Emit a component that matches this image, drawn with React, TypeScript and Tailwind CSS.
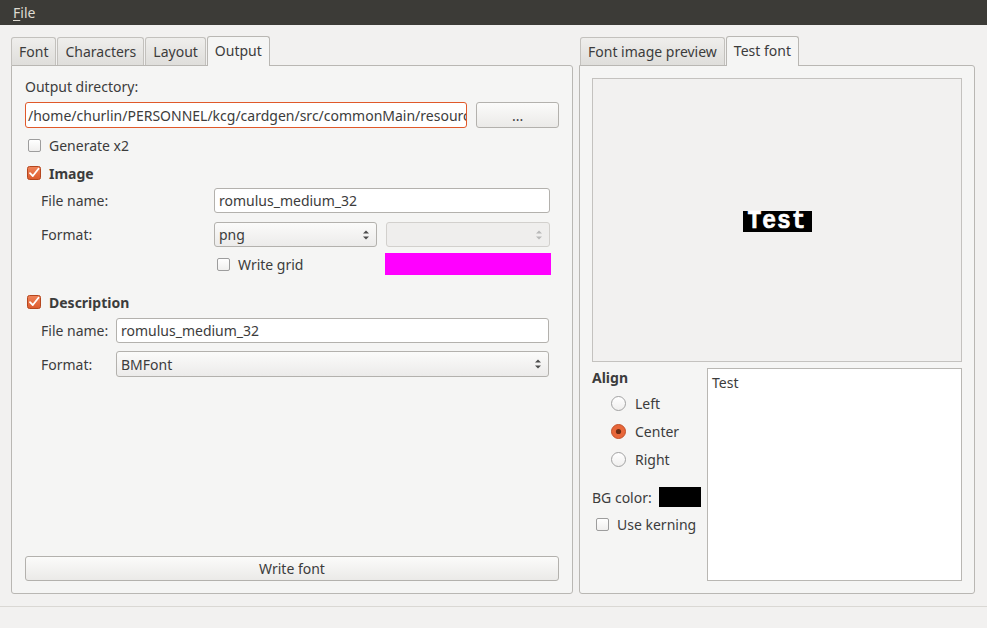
import React from "react";

const font = { fontFamily: '"Noto Sans", "Open Sans", sans-serif' };

function Check({ checked }: { checked?: boolean }) {
  if (checked) {
    return (
      <svg width="14" height="14" viewBox="0 0 14 14" className="shrink-0">
        <defs>
          <linearGradient id="og" x1="0" y1="0" x2="0" y2="1">
            <stop offset="0" stopColor="#f0845a" />
            <stop offset="1" stopColor="#dc5a2c" />
          </linearGradient>
        </defs>
        <rect x="0.5" y="0.5" width="13" height="13" rx="2" fill="url(#og)" stroke="#b4471f" />
        <path d="M3 7.2 L5.8 10 L11.5 2.8" fill="none" stroke="#fff" strokeWidth="1.8" strokeLinecap="round" strokeLinejoin="round" />
      </svg>
    );
  }
  return (
    <div className="w-[13px] h-[13px] shrink-0 rounded-[2px] border border-[#9d9d9d] bg-gradient-to-b from-[#ffffff] to-[#f0efee]" />
  );
}

function Radio({ checked }: { checked?: boolean }) {
  if (checked) {
    return (
      <svg width="15" height="15" viewBox="0 0 15 15" className="shrink-0">
        <circle cx="7.5" cy="7.5" r="7" fill="#e8673a" stroke="#c2502a" />
        <circle cx="7.5" cy="7.5" r="2.6" fill="#6b2c14" />
      </svg>
    );
  }
  return (
    <div className="w-[15px] h-[15px] shrink-0 rounded-full border border-[#a2a2a2] bg-gradient-to-b from-[#ffffff] to-[#f0efee]" />
  );
}

function Arrows({ disabled }: { disabled?: boolean }) {
  const c = disabled ? "#b8b8b8" : "#4c4c4c";
  return (
    <svg width="8" height="12" viewBox="0 0 8 12" className="shrink-0">
      <path d="M1 4.5 L4 1.5 L7 4.5 Z" fill={c} />
      <path d="M1 7.5 L4 10.5 L7 7.5 Z" fill={c} />
    </svg>
  );
}

function Combo({ value, disabled, className }: { value?: string; disabled?: boolean; className: string }) {
  return (
    <div
      className={`${className} h-[25px] rounded-[3px] border flex items-center justify-between pl-[4px] pr-[6px] ${
        disabled
          ? "border-[#d2d0cd] bg-[#efeeed]"
          : "border-[#b3b1ad] bg-gradient-to-b from-[#fbfbfa] to-[#ecebea]"
      }`}
    >
      <span className="text-[#3c3c3c]">{value}</span>
      <Arrows disabled={disabled} />
    </div>
  );
}

function Input({ value, className }: { value: string; className: string }) {
  return (
    <div
      className={`${className} h-[25px] rounded-[3px] border border-[#b3b1ad] bg-white flex items-center pl-[4px] overflow-hidden whitespace-nowrap text-[#3c3c3c]`}
    >
      {value}
    </div>
  );
}

function Tab({ label, active, className = "" }: { label: string; active?: boolean; className?: string }) {
  if (active) {
    return (
      <div
        className={`${className} h-[30px] -mb-[1px] px-[7px] flex items-center rounded-t-[3px] border border-b-0 border-[#b9b7b3] bg-[#f5f5f4] text-[#3c3c3c] relative z-10`}
      >
        <span className="-mt-[2px]">{label}</span>
      </div>
    );
  }
  return (
    <div
      className={`${className} h-[28px] px-[7px] flex items-center rounded-t-[3px] border border-b-0 border-[#c3c1bd] bg-gradient-to-b from-[#efeeec] to-[#dfdedb] text-[#3c3c3c] mr-[1px]`}
    >
      {label}
    </div>
  );
}

export default function App() {
  return (
    <div style={font} className="w-[987px] h-[628px] bg-[#f2f1f0] text-[14px] text-[#3c3c3c] flex flex-col overflow-hidden">
      {/* Menu bar */}
      <div className="h-[25px] bg-[#3c3b37] flex items-center px-[13px] shrink-0">
        <span className="text-[#dfdbd2] text-[14px]">
          <span className="underline underline-offset-2">F</span>ile
        </span>
      </div>

      {/* Main */}
      <div className="flex flex-1 pl-[11px] pt-[10px] pr-[12px] gap-[6px]">
        {/* Left tab widget */}
        <div className="w-[562px] flex flex-col h-[559px]">
          <div className="flex items-end h-[30px]">
            <Tab label="Font" />
            <Tab label="Characters" />
            <Tab label="Layout" />
            <Tab label="Output" active />
          </div>
          <div className="flex-1 border border-[#b9b7b3] rounded-b-[3px] rounded-tr-[3px] bg-[#f5f5f4] flex flex-col px-[13px] pt-[11px] pb-[12px]">
            <div className="leading-[20px]">Output directory:</div>
            <div className="flex gap-[9px] mt-[5px]">
              <div className="w-[443px] h-[26px] rounded-[3px] border border-[#e0592a] bg-white flex items-center pl-[2px] overflow-hidden whitespace-nowrap text-[#3c3c3c]">
                /home/churlin/PERSONNEL/kcg/cardgen/src/commonMain/resources
              </div>
              <div className="w-[83px] h-[26px] rounded-[3px] border border-[#b3b1ad] bg-gradient-to-b from-[#fbfbfa] to-[#ebeae8] flex items-center justify-center text-[#3c3c3c]">
                ...
              </div>
            </div>
            <div className="flex items-center gap-[8px] mt-[7px] ml-[3px] h-[20px]">
              <Check />
              <span>Generate x2</span>
            </div>
            <div className="flex items-center gap-[8px] mt-[8px] ml-[2px] h-[20px]">
              <Check checked />
              <span className="font-bold">Image</span>
            </div>
            {/* Image grid */}
            <div className="grid grid-cols-[173px_163px_9px_164px] items-center ml-[16px]">
              <span className="h-[25px] flex items-center mt-[5px]">File name:</span>
              <Input value="romulus_medium_32" className="col-span-3 mt-[5px]" />
              <span className="h-[25px] flex items-center mt-[9px]">Format:</span>
              <Combo value="png" className="mt-[9px]" />
              <div />
              <Combo disabled className="mt-[9px]" />
              <div className="mt-[6px]" />
              <div className="flex items-center gap-[8px] mt-[6px] pl-[3px] h-[22px]">
                <Check />
                <span>Write grid</span>
              </div>
              <div />
              <div className="mt-[6px] h-[22px] w-[166px] -ml-[1px] bg-[#ff00ff]" />
            </div>
            <div className="flex items-center gap-[8px] mt-[17px] ml-[2px] h-[20px]">
              <Check checked />
              <span className="font-bold">Description</span>
            </div>
            <div className="grid grid-cols-[75px_433px] items-center ml-[16px]">
              <span className="h-[25px] flex items-center mt-[6px]">File name:</span>
              <Input value="romulus_medium_32" className="mt-[6px]" />
              <span className="h-[25px] flex items-center mt-[8px]">Format:</span>
              <Combo value="BMFont" className="mt-[8px] h-[26px]" />
            </div>
            <div className="flex-1" />
            <div className="h-[25px] rounded-[3px] border border-[#b3b1ad] bg-gradient-to-b from-[#fbfbfa] to-[#ebeae8] flex items-center justify-center">
              Write font
            </div>
          </div>
        </div>

        {/* Right tab widget */}
        <div className="w-[396px] flex flex-col h-[559px]">
          <div className="flex items-end h-[30px] pl-[1px]">
            <Tab label="Font image preview" />
            <Tab label="Test font" active />
          </div>
          <div className="flex-1 border border-[#b9b7b3] rounded-[3px] rounded-tl-none bg-[#f5f5f4] flex flex-col px-[12px] pt-[12px] pb-[12px]">
            <div className="h-[284px] border border-[#c4c2bf] bg-[#f2f1f0] flex items-center justify-center">
              <div className="bg-black w-[69px] h-[21px] flex items-center justify-center mt-[2px]">
                <span
                  className="text-white font-bold text-[23px] leading-[21px] tracking-[1px] scale-y-[1.12] [-webkit-text-stroke:0.6px_white]"
                  style={{ fontFamily: '"Liberation Mono", monospace' }}
                >
                  Test
                </span>
              </div>
            </div>
            <div className="flex flex-1 mt-[6px] gap-[6px]">
              <div className="w-[109px] flex flex-col">
                <div className="font-bold leading-[20px]">Align</div>
                <div className="flex flex-col gap-[8px] mt-[5px] ml-[19px]">
                  <div className="flex items-center gap-[9px] h-[20px]">
                    <Radio />
                    <span>Left</span>
                  </div>
                  <div className="flex items-center gap-[9px] h-[20px]">
                    <Radio checked />
                    <span>Center</span>
                  </div>
                  <div className="flex items-center gap-[9px] h-[20px]">
                    <Radio />
                    <span>Right</span>
                  </div>
                </div>
                <div className="flex items-center gap-[7px] mt-[18px] h-[20px]">
                  <span>BG color:</span>
                  <div className="w-[42px] h-[20px] bg-black" />
                </div>
                <div className="flex items-center gap-[8px] mt-[7px] ml-[4px] h-[20px]">
                  <Check />
                  <span>Use kerning</span>
                </div>
              </div>
              <div className="flex-1 border border-[#b9b7b3] bg-white px-[4px] pt-[3px]">Test</div>
            </div>
          </div>
        </div>
      </div>

      {/* Status bar */}
      <div className="h-[22px] border-t border-[#dad8d4] shrink-0 mt-[12px]" />
    </div>
  );
}
